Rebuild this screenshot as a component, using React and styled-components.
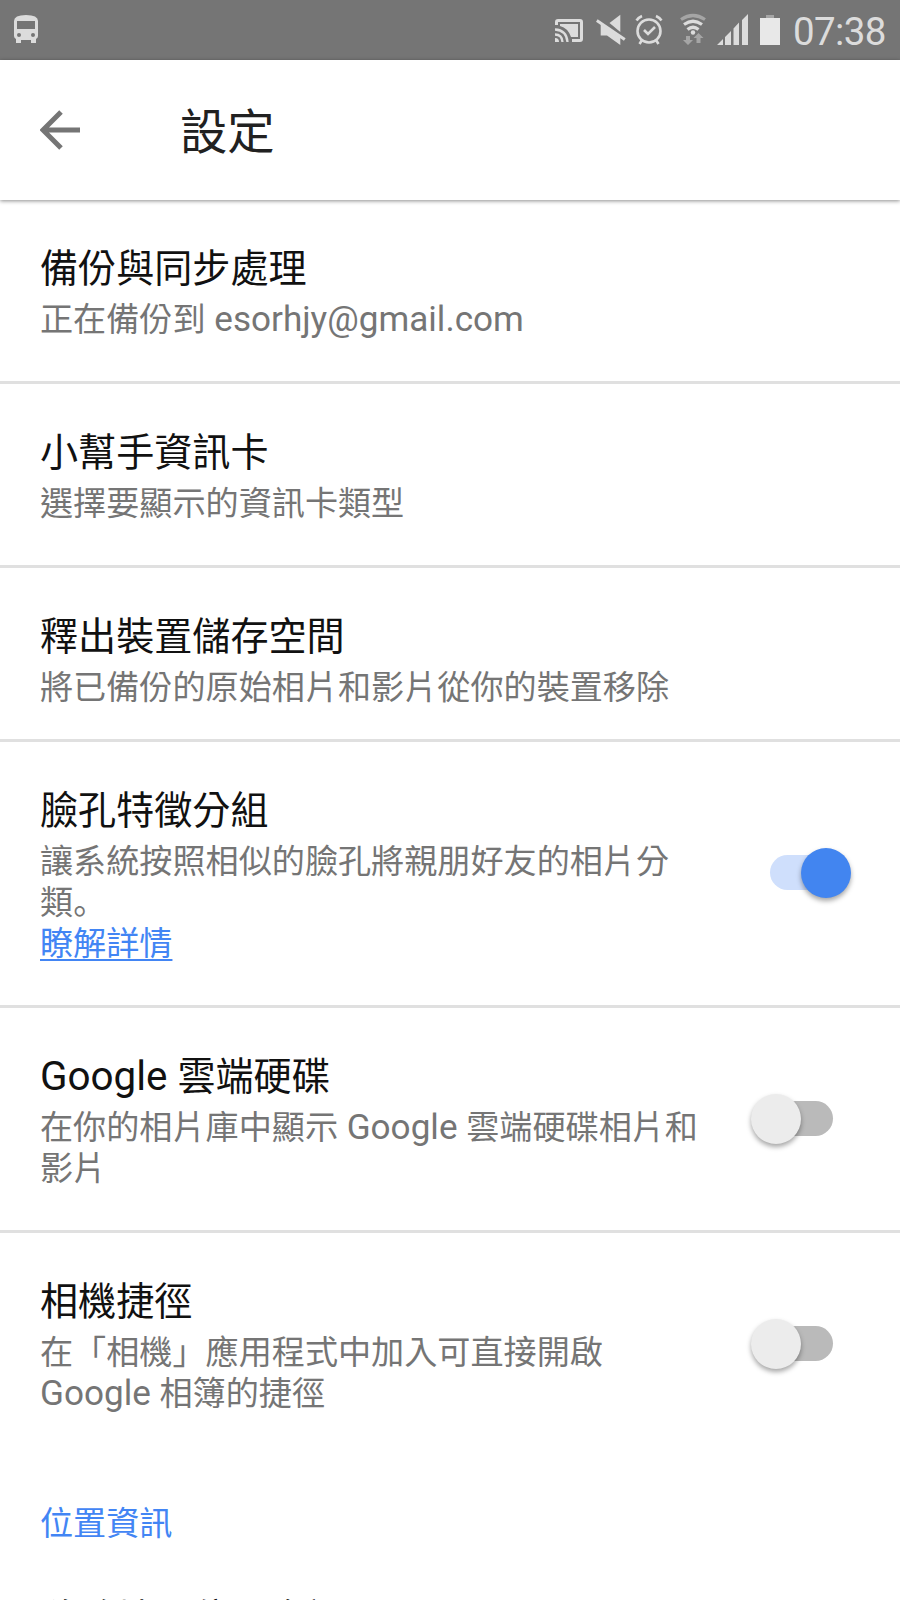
import React from 'react'
import styled, { createGlobalStyle } from 'styled-components'

const GlobalStyle = createGlobalStyle`
  * {
    box-sizing: border-box;
  }
  body {
    margin: 0;
    background-color: #fff;
    font-family: Roboto, 'Noto Sans CJK TC', sans-serif;
  }
  h1,
  h2,
  p {
    margin: 0;
    font-weight: 400;
  }
`

const Screen = styled.div`
  width: 900px;
  height: 1600px;
  overflow: hidden;
  background-color: #fff;
`

const StatusBar = styled.header`
  display: flex;
  align-items: center;
  justify-content: space-between;
  height: 60px;
  padding: 0 14px;
  background-color: #757575;
`

const StatusIcons = styled.div`
  display: flex;
  align-items: center;
`

const StatusIcon = styled.svg`
  display: block;
  flex: none;
  width: ${({ $width }) => $width}px;
  height: 60px;
  margin-right: ${({ $gap }) => $gap || 0}px;
  fill: #dcdcdc;
`

const Clock = styled.span`
  width: 93px;
  padding-top: 3px;
  font-size: 38.5px;
  line-height: 57px;
  letter-spacing: -0.6px;
  white-space: nowrap;
  color: #dcdcdc;
`

const Toolbar = styled.div`
  display: flex;
  align-items: center;
  height: 140px;
  padding-left: 40px;
  box-shadow: 0 1px 4px rgba(0, 0, 0, 0.45);
`

const BackButton = styled.button`
  display: flex;
  width: 140px;
  padding: 0;
  border: 0;
  background: none;
  cursor: pointer;
`

const PageTitle = styled.h1`
  font-size: 47.3px;
  line-height: 60px;
  padding-top: 6px;
  color: #212121;
`

const Row = styled.section`
  display: flex;
  align-items: flex-start;
  justify-content: space-between;
  height: ${({ $height }) => $height}px;
  padding: ${({ $top }) => $top || 46}px 40px 0;
  border-bottom: ${({ $last }) => ($last ? '0' : '3px solid #e0e0e0')};
`

const RowText = styled.div`
  width: ${({ $narrow }) => ($narrow ? '670px' : 'auto')};
`

const RowTitle = styled.h2`
  font-size: 38.1px;
  line-height: 46px;
  color: #111;
  white-space: nowrap;
`

const Summary = styled.p`
  padding-top: 7px;
  font-size: 33.12px;
  line-height: 41px;
  color: #757575;
`

// Latin runs are set a little larger than the Chinese text around them
const Latin = styled.span`
  font-size: 1.06em;
  line-height: 1;
`

const FullStop = styled.span`
  font-family: 'Noto Sans CJK JP', sans-serif;
  line-height: 1;
`

const Link = styled.a`
  color: #4285f4;
  text-decoration: underline;
  text-decoration-thickness: 2px;
  text-underline-offset: 4px;
`

const Switch = styled.button`
  display: flex;
  align-items: center;
  justify-content: ${({ $on }) => ($on ? 'flex-end' : 'flex-start')};
  width: 62px;
  height: 35px;
  margin: ${({ $on }) => ($on ? '67px 28px 0 0' : '47px 27px 0 0')};
  padding: 0;
  border: 0;
  border-radius: 18px;
  background-color: ${({ $on }) => ($on ? '#cfdffc' : '#bababa')};
`

const Thumb = styled.span`
  flex: none;
  width: 50px;
  height: 50px;
  margin: ${({ $on }) => ($on ? '0 -19px 0 0' : '0 0 0 -20px')};
  border-radius: 50%;
  background-color: ${({ $on }) => ($on ? '#4285f0' : '#ececec')};
  box-shadow: 0 3px 5px rgba(0, 0, 0, 0.35);
`

const SectionLabel = styled.p`
  padding: 66px 40px 0;
  font-size: 33.12px;
  line-height: 41px;
  color: #4285f4;
`

const rows = [
  {
    title: '備份與同步處理',
    summary: '正在備份到 esorhjy@gmail.com',
    height: 184,
  },
  { title: '小幫手資訊卡', summary: '選擇要顯示的資訊卡類型', height: 184 },
  {
    title: '釋出裝置儲存空間',
    summary: '將已備份的原始相片和影片從你的裝置移除',
    height: 174,
  },
  {
    title: '臉孔特徵分組',
    summary: '讓系統按照相似的臉孔將親朋好友的相片分類。',
    link: '瞭解詳情',
    height: 266,
    toggle: true,
    on: true,
  },
  {
    title: 'Google 雲端硬碟',
    summary: '在你的相片庫中顯示 Google 雲端硬碟相片和影片',
    height: 225,
    toggle: true,
  },
  {
    title: '相機捷徑',
    summary: '在「相機」應用程式中加入可直接開啟 Google 相簿的捷徑',
    height: 204,
    toggle: true,
    last: true,
  },
]

function MixedText({ children }) {
  return children.split(/([\x20-\x7e]+|。)/).map((part, i) => {
    if (part === '。') return <FullStop key={i}>{part}</FullStop>
    if (i % 2) return <Latin key={i}>{part}</Latin>
    return part
  })
}

function BusIcon() {
  return (
    <StatusIcon $width={24} viewBox="0 0 24 60">
      <path
        fillRule="evenodd"
        d="M0 21q0-6 12-6t12 6v15q0 2-2 3v4h-5v-3H7v3H2v-4q-2-1-2-3zM3 21v8h18v-8zM5 33a2 2 0 1 0 0 4 2 2 0 0 0 0-4zM19 33a2 2 0 1 0 0 4 2 2 0 0 0 0-4z"
      />
    </StatusIcon>
  )
}

function CastIcon() {
  return (
    <StatusIcon $width={28} $gap={13} viewBox="0 0 28 60">
      <path d="M3 19h22q3 0 3 3v17q0 3-3 3h-8v-3h8V22H3v3H0v-3q0-3 3-3z" />
      <path d="M5 24h18v13h-7Q13 28 5 26z" />
      <path d="M0 38q4 0 4 4H0z" />
      <path
        d="M0 34.5Q7 34.5 7.5 42M0 29.5Q11.5 30 12.5 42"
        fill="none"
        stroke="#dcdcdc"
        strokeWidth="2.3"
      />
    </StatusIcon>
  )
}

function MuteIcon() {
  return (
    <StatusIcon $width={30} $gap={9} viewBox="0 0 30 60">
      <path d="M24.3 14.7V32L13.5 23z" />
      <path d="M4.7 24v11.5H11L24.3 45v-8z" />
      <path d="M.8 20.5l28 19" stroke="#dcdcdc" strokeWidth="3" />
    </StatusIcon>
  )
}

function AlarmIcon() {
  return (
    <StatusIcon $width={28} $gap={17} viewBox="0 0 28 60">
      <g fill="none" stroke="#dcdcdc" strokeWidth="2.6">
        <circle cx="14" cy="31" r="11.5" />
        <path d="M1.5 20.5q2-3 5.5-4.5M26.5 20.5q-2-3-5.5-4.5" />
        <path d="M7 40l-2.5 4M21 40l2.5 4M9 30l4 4 7-7" />
      </g>
    </StatusIcon>
  )
}

function WifiIcon() {
  return (
    <StatusIcon $width={26} $gap={11} viewBox="0 0 26 60">
      <g fill="none" stroke="#dcdcdc" strokeWidth="3.2">
        <path d="M1 19.5q12-8 24 0" stroke="#a5a5a5" />
        <path d="M4 24.5q9-6.5 18 0M7.5 29.5q5.5-4.5 11 0" />
      </g>
      <circle cx="13" cy="32.5" r="2.2" />
      <path
        d="M6 36h4v4h3l-5 5-5-5h3zM16.5 43h4v-5h3l-5-5-5 5h3z"
        fill="#a5a5a5"
      />
    </StatusIcon>
  )
}

function SignalIcon() {
  return (
    <StatusIcon $width={31} $gap={12} viewBox="0 0 31 60">
      <path d="M0 45l6-6v6zM8 37l6-6v14H8zM16.5 28.5l5.5-6V45h-5.5zM25 20l6-6v31h-6z" />
    </StatusIcon>
  )
}

function BatteryIcon() {
  return (
    <StatusIcon $width={20} $gap={13} viewBox="0 0 20 60">
      <path d="M6 15h8v4H6z" fill="#a5a5a5" />
      <path d="M0 18h20v27H0z" fill="#e8e8e8" />
    </StatusIcon>
  )
}

function SettingRow({ title, summary, link, height, toggle, on, last }) {
  return (
    <Row $height={height} $last={last}>
      <RowText $narrow={toggle}>
        <RowTitle>
          <MixedText>{title}</MixedText>
        </RowTitle>
        <Summary>
          <MixedText>{summary}</MixedText>
          {link && (
            <React.Fragment>
              <br />
              <Link>{link}</Link>
            </React.Fragment>
          )}
        </Summary>
      </RowText>
      {toggle && (
        <Switch $on={on} role="switch" aria-checked={!!on}>
          <Thumb $on={on} />
        </Switch>
      )}
    </Row>
  )
}

export default function App() {
  return (
    <Screen>
      <GlobalStyle />
      <StatusBar>
        <BusIcon />
        <StatusIcons>
          <CastIcon />
          <MuteIcon />
          <AlarmIcon />
          <WifiIcon />
          <SignalIcon />
          <BatteryIcon />
          <Clock>07:38</Clock>
        </StatusIcons>
      </StatusBar>
      <Toolbar>
        <BackButton aria-label="返回">
          <svg width="40" height="40" viewBox="0 0 40 40">
            <path
              d="M40 20H4M21 2L3 20l18 18"
              fill="none"
              stroke="#757575"
              strokeWidth="5"
            />
          </svg>
        </BackButton>
        <PageTitle>設定</PageTitle>
      </Toolbar>
      {rows.map((row) => (
        <SettingRow key={row.title} {...row} />
      ))}
      <SectionLabel>位置資訊</SectionLabel>
      <Row $height={200} $top={52}>
        <RowTitle>移除地理位置資訊</RowTitle>
      </Row>
    </Screen>
  )
}
